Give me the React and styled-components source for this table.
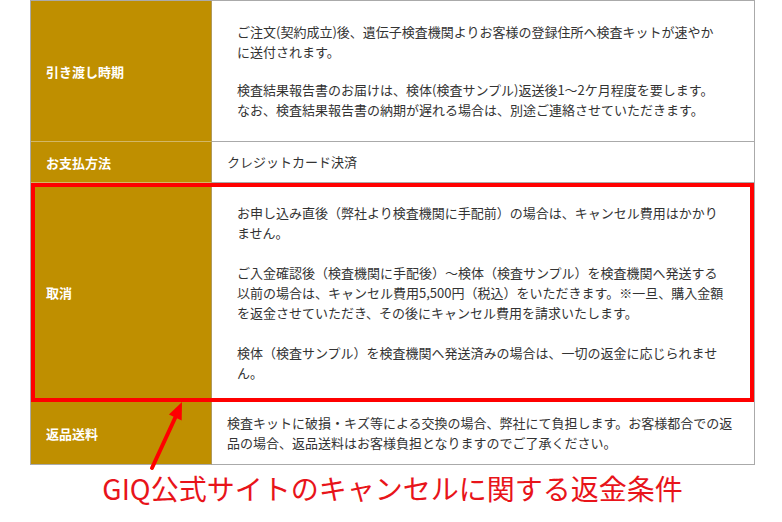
import React from 'react';
import styled, { createGlobalStyle } from 'styled-components';

const GlobalStyle = createGlobalStyle`
  html, body {
    margin: 0;
    padding: 0;
    background: #fff;
  }
  body {
    font-family: "Noto Sans CJK JP", "Noto Sans", sans-serif;
    color: #333;
  }
`;

const Page = styled.div`
  position: relative;
  width: 782px;
  height: 522px;
  padding-left: 30px;
  box-sizing: border-box;
`;

const Table = styled.div`
  width: 725px;
  box-sizing: border-box;
  border: 1px solid #aaa;
  border-bottom: none;
`;

const Row = styled.div`
  display: grid;
  grid-template-columns: 181px 1fr;
  outline: ${(p) => (p.$highlight ? '4px solid #f00' : 'none')};
  outline-offset: -4px;
`;

const Label = styled.div`
  display: flex;
  align-items: center;
  box-sizing: border-box;
  padding-left: 15px;
  background: #bf8f00;
  border-right: 1px solid #b09a5e;
  border-bottom: 1px solid ${(p) => (p.$last ? '#aaa' : '#d3b766')};
  color: #fff;
  font-size: 13px;
  font-weight: 700;
`;

const Value = styled.div`
  padding: ${(p) => p.$pad || '10px 15px'};
  border-bottom: 1px solid #aaa;
  font-size: 13px;
  line-height: 20px;
  white-space: nowrap;
`;

const Prose = styled.div`
  padding-left: 10px;
  display: flex;
  flex-direction: column;
  gap: ${(p) => p.$gap || '20px'};
`;

const Para = styled.p`
  margin: 0;
`;

const Caption = styled.div`
  width: 725px;
  margin-top: 6px;
  text-align: center;
  color: #e8141a;
  font-size: 28px;
  line-height: 34px;
`;

const Arrow = styled.svg`
  position: absolute;
  left: 140px;
  top: 396px;
  width: 50px;
  height: 80px;
  overflow: visible;
`;

export default function App() {
  return (
    <>
      <GlobalStyle />
      <Page>
        <Table>
          <Row>
            <Label>引き渡し時期</Label>
            <Value $pad="21px 15px">
              <Prose $gap="18px">
                <Para>
                  ご注文(契約成立)後、遺伝子検査機関よりお客様の登録住所へ検査キットが速やか
                  <br />
                  に送付されます。
                </Para>
                <Para>
                  検査結果報告書のお届けは、検体(検査サンプル)返送後1～2ケ月程度を要します。
                  <br />
                  なお、検査結果報告書の納期が遅れる場合は、別途ご連絡させていただきます。
                </Para>
              </Prose>
            </Value>
          </Row>
          <Row>
            <Label>お支払方法</Label>
            <Value>クレジットカード決済</Value>
          </Row>
          <Row $highlight>
            <Label>取消</Label>
            <Value $pad="20px 15px 18px">
              <Prose>
                <Para>
                  お申し込み直後（弊社より検査機関に手配前）の場合は、キャンセル費用はかかり
                  <br />
                  ません。
                </Para>
                <Para>
                  ご入金確認後（検査機関に手配後）～検体（検査サンプル）を検査機関へ発送する
                  <br />
                  以前の場合は、キャンセル費用5,500円（税込）をいただきます。※一旦、購入金額
                  <br />
                  を返金させていただき、その後にキャンセル費用を請求いたします。
                </Para>
                <Para>
                  検体（検査サンプル）を検査機関へ発送済みの場合は、一切の返金に応じられませ
                  <br />
                  ん。
                </Para>
              </Prose>
            </Value>
          </Row>
          <Row>
            <Label $last>返品送料</Label>
            <Value $pad="11px 15px">
              検査キットに破損・キズ等による交換の場合、弊社にて負担します。お客様都合での返
              <br />
              品の場合、返品送料はお客様負担となりますのでご了承ください。
            </Value>
          </Row>
        </Table>
        <Caption>GIQ公式サイトのキャンセルに関する返金条件</Caption>
        <Arrow viewBox="0 0 50 80">
          <line x1="12" y1="72" x2="35.3" y2="21.5" stroke="#f00" strokeWidth="4" strokeLinecap="round" />
          <polygon points="42,6 41.7,24.4 28.9,18.6" fill="#f00" />
        </Arrow>
      </Page>
    </>
  );
}
